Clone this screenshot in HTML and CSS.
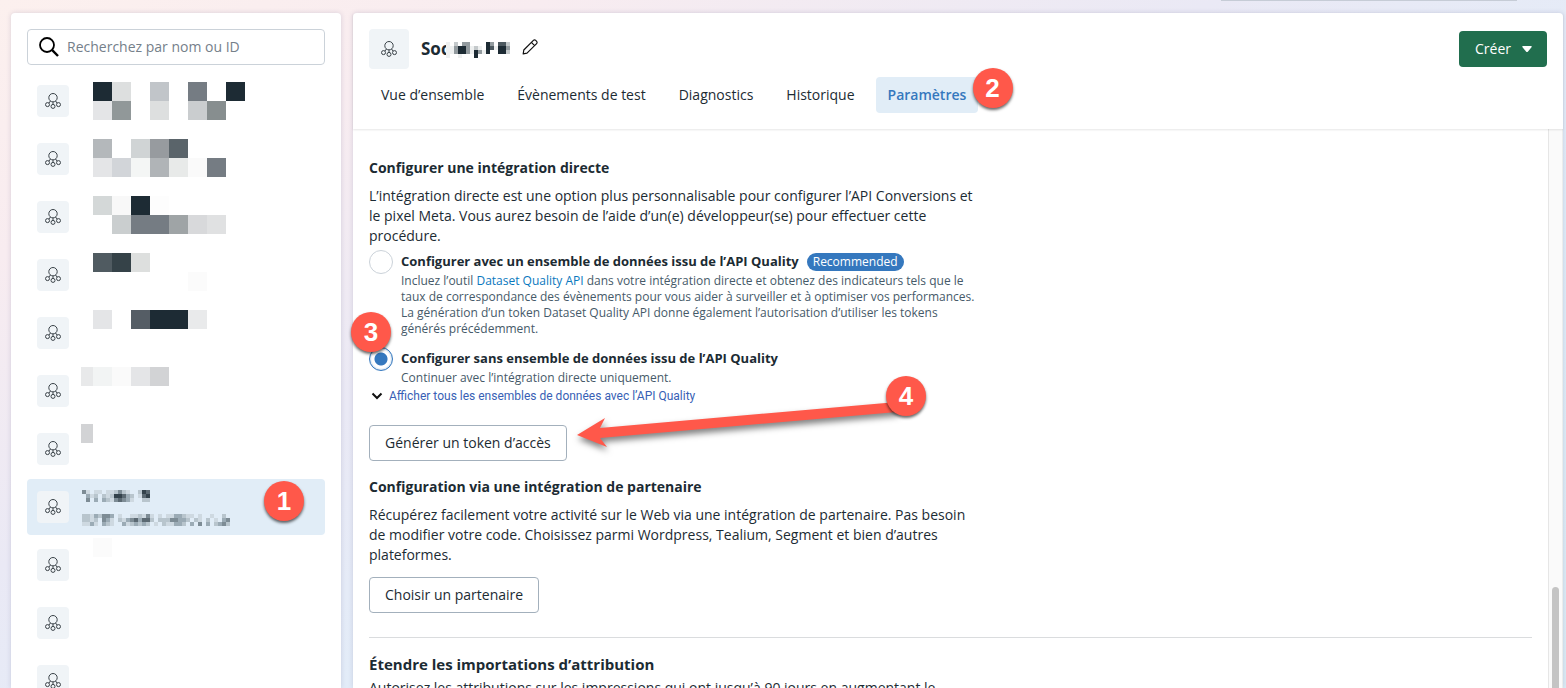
FILE: index.html
```
<!DOCTYPE html>
<html lang="fr">
<head>
	<meta charset="UTF-8">
	<meta name="viewport" content="width=device-width, initial-scale=1">
	<title>Paramètres</title>
	<link rel="stylesheet" href="styles.css">
</head>
<body>
	<svg class="defs" width="0" height="0" aria-hidden="true">
		<symbol id="dataset" viewBox="0 0 16 16">
			<g fill="none" stroke="#3a4248" stroke-width="1">
				<circle cx="8" cy="4.7" r="4.2"/>
				<circle cx="2.5" cy="11.6" r="2"/>
				<circle cx="13.5" cy="11.6" r="2"/>
				<circle cx="8" cy="13.4" r="2"/>
				<path d="M5.4 8L4 10M10.6 8L12 10M8 8.8v2.4"/>
			</g>
		</symbol>
	</svg>
	<div class="topbox"></div>
	<div class="page">
		<aside class="sidebar">
			<label class="search">
				<svg width="22" height="22" viewBox="0 0 22 22" fill="none" stroke="#000"><circle cx="9" cy="9" r="7" stroke-width="1.8"/><path d="M14.2 14.2L20 20" stroke-width="2.4"/></svg>
				<input type="text" placeholder="Recherchez par nom ou ID" aria-label="Recherchez par nom ou ID">
			</label>
			<ul class="list">
				<li><span class="avatar"><svg><use href="#dataset"/></svg></span></li>
				<li><span class="avatar"><svg><use href="#dataset"/></svg></span></li>
				<li><span class="avatar"><svg><use href="#dataset"/></svg></span></li>
				<li><span class="avatar"><svg><use href="#dataset"/></svg></span></li>
				<li><span class="avatar"><svg><use href="#dataset"/></svg></span></li>
				<li><span class="avatar"><svg><use href="#dataset"/></svg></span></li>
				<li><span class="avatar"><svg><use href="#dataset"/></svg></span></li>
				<li class="selected">
					<span class="avatar"><svg><use href="#dataset"/></svg></span>
					<span class="lines">
						<svg id="maskName" width="68" height="12"></svg>
						<svg id="maskId" width="148" height="12"></svg>
					</span>
					<b class="step step1">1</b>
				</li>
				<li><span class="avatar"><svg><use href="#dataset"/></svg></span></li>
				<li><span class="avatar"><svg><use href="#dataset"/></svg></span></li>
				<li><span class="avatar"><svg><use href="#dataset"/></svg></span></li>
				<svg id="maskList" class="masklist" width="164" height="480"></svg>
			</ul>
		</aside>
		<main class="panel">
			<header class="head">
				<div class="headrow">
					<span class="avatar big"><svg><use href="#dataset"/></svg></span>
					<h1>Soc<svg id="maskTitle" class="masktitle" width="64" height="16"></svg></h1>
					<button class="edit" aria-label="Modifier">
						<svg width="16" height="16" viewBox="0 0 16 16" fill="none" stroke="#111" stroke-width="1.2" stroke-linejoin="round"><path d="M1.2 14.8l.6-3.8L11.4 1.4a1.6 1.6 0 0 1 2.3 0l.9.9a1.6 1.6 0 0 1 0 2.3L5 14.2zM9.4 3.4l3.2 3.2"/></svg>
					</button>
					<button class="create">Créer <svg width="10" height="6" viewBox="0 0 10 6"><path d="M1 0h8q1 0 .7.9L6 5.5q-1 1-2 0L.3.9Q0 0 1 0z" fill="#fff"/></svg></button>
				</div>
				<nav class="tabs">
					<a href="#">Vue d’ensemble</a>
					<a href="#">Évènements de test</a>
					<a href="#">Diagnostics</a>
					<a href="#">Historique</a>
					<a href="#" class="active">Paramètres<b class="step step2">2</b></a>
				</nav>
			</header>
			<div class="body">
				<div class="content">
					<section>
						<h2>Configurer une intégration directe</h2>
						<p>L’intégration directe est une option plus personnalisable pour configurer l’API Conversions et le pixel Meta. Vous aurez besoin de l’aide d’un(e) développeur(se) pour effectuer cette procédure.</p>
						<div class="option">
							<input type="radio" name="mode" id="with">
							<div>
								<label for="with">Configurer avec un ensemble de données issu de l’API Quality</label><span class="badge">Recommended</span>
								<p class="small">Incluez l’outil <a href="#">Dataset Quality API</a> dans votre intégration directe et obtenez des indicateurs tels que le taux de correspondance des évènements pour vous aider à surveiller et à optimiser vos performances. La génération d’un token Dataset Quality API donne également l’autorisation d’utiliser les tokens générés précédemment.</p>
							</div>
						</div>
						<div class="option">
							<input type="radio" name="mode" id="without" checked>
							<div>
								<label for="without">Configurer sans ensemble de données issu de l’API Quality</label>
								<p class="small">Continuer avec l’intégration directe uniquement.</p>
							</div>
							<b class="step step3">3</b>
						</div>
						<a href="#" class="more"><svg width="12" height="8" viewBox="0 0 12 8" fill="none" stroke="#111" stroke-width="2"><path d="M1.5 1.5L6 6l4.5-4.5"/></svg>Afficher tous les ensembles de données avec l’API Quality</a>
						<div class="action">
							<button class="btn">Générer un token d’accès</button>
							<svg class="arrow" width="340" height="60" viewBox="0 0 340 60"><path d="M6 36L34 19 29 29 326 3v10L29 39 36 48z" fill="#ff584a"/></svg>
							<b class="step step4">4</b>
						</div>
					</section>
					<section>
						<h2>Configuration via une intégration de partenaire</h2>
						<p>Récupérez facilement votre activité sur le Web via une intégration de partenaire. Pas besoin de modifier votre code. Choisissez parmi Wordpress, Tealium, Segment et bien d’autres plateformes.</p>
						<button class="btn partner">Choisir un partenaire</button>
					</section>
					<section class="ruled">
						<h2 class="large">Étendre les importations d’attribution</h2>
						<p>Autorisez les attributions sur les impressions qui ont jusqu’à 90 jours en augmentant le</p>
					</section>
				</div>
				<div class="track"><div class="thumb"></div></div>
			</div>
		</main>
	</div>
	<script src="script.js"></script>
</body>
</html>
```
FILE: styles.css
```
*{box-sizing: border-box;}
body,ul,h1,h2,p{padding: 0;margin: 0;}
body{height: 100vh;overflow: hidden;position: relative;font: 14px/20px "Open Sans","Liberation Sans",sans-serif;color: #1c2b33;background: linear-gradient(155deg,#fcf0ee 0%,#f8ecf0 18%,#eae9f5 40%,#e0edf9 66%,#dcecf5 100%);}
a{color: #0a78be;text-decoration: none;}
button,input{font: inherit;color: inherit;}
button{cursor: pointer;}
.defs{position: absolute;}
.topbox{position: absolute;top: 0;right: 49px;width: 296px;height: 1px;background: #c6ccd6;}
.page{display: flex;gap: 12px;height: 100%;padding: 13px 3px 0 11px;}
.sidebar,.panel{background: #fff;border-radius: 4px 4px 0 0;box-shadow: 0 0 5px rgba(60,60,110,.18);}

.sidebar{flex: 0 0 330px;padding: 16px;overflow: hidden;}
.search{display: flex;align-items: center;gap: 7px;height: 36px;padding: 0 10px;border: 1px solid #cbd2d9;border-radius: 4px;}
.search input{flex: 1;min-width: 0;border: 0;outline: 0;padding: 0;background: none;}
.search input::placeholder{color: #75808a;opacity: 1;}
.list{position: relative;margin-top: 8px;list-style: none;}
.list li{position: relative;display: flex;align-items: center;gap: 13px;height: 56px;margin-bottom: 2px;padding: 0 10px;border-radius: 4px;}
.list .selected{background: #e1edf7;}
.avatar{display: flex;align-items: center;justify-content: center;flex: none;width: 32px;height: 32px;border-radius: 4px;background: #f0f4f7;}
.avatar svg{width: 16px;height: 16px;}
.avatar.big{width: 40px;height: 40px;}
.lines{display: flex;flex-direction: column;gap: 12px;padding-top: 2px;}
.masklist{position: absolute;left: 54px;top: 9px;}

.panel{flex: 1;min-width: 0;display: flex;flex-direction: column;}
.head{padding: 16px;box-shadow: 0 1px 2px rgba(0,0,0,.1);z-index: 1;}
.headrow{display: flex;align-items: center;margin-bottom: 8px;}
.head h1{position: relative;width: 89px;margin-left: 12px;font-size: 17px;line-height: 24px;font-weight: 700;}
.masktitle{position: absolute;left: 25px;top: 5px;}
.edit{display: flex;margin-left: 12px;padding: 0 0 4px;border: 0;background: none;}
.create{display: flex;align-items: center;gap: 11px;height: 36px;margin-left: auto;padding: 0 15px 0 16px;border: 0;border-radius: 4px;background: #216e4e;color: #fff;font-weight: 500;}
.tabs{display: flex;gap: 9px;}
.tabs a{position: relative;padding: 8px 12px;border-radius: 4px;color: #1c2b33;}
.tabs .active{background: #e1edf7;color: #3578be;font-weight: 600;}

.body{flex: 1;min-height: 0;display: flex;}
.content{flex: 1;min-width: 0;padding: 29px 16px 0;}
.content h2{margin-bottom: 8px;font-size: 14px;line-height: 20px;font-weight: 700;}
.content .large{margin-bottom: 4px;font-size: 15px;}
.content p{max-width: 610px;}
.option{position: relative;display: flex;align-items: flex-start;gap: 8px;margin-top: 4px;}
.option + .option{margin-top: 10px;}
.option label{font-size: 13px;font-weight: 700;line-height: 23px;}
.option .small{max-width: 574px;font-size: 12px;line-height: 16px;color: #465a69;}
.option input{appearance: none;flex: none;width: 24px;height: 24px;margin: 0;border: 1px solid #cbd2d9;border-radius: 50%;background: #fff;}
.option input:checked{border: 1px solid #3578be;background: radial-gradient(circle,#3578be 0 6px,#fff 7px 9px,#cfdfef 11px);}
.badge{display: inline-block;margin-left: 8px;padding: 0 6px;border-radius: 9px;background: #3578be;color: #fff;font-size: 12px;line-height: 18px;font-weight: 500;}
.more{display: flex;align-items: center;gap: 6px;margin: 2px 0 21px;padding-left: 2px;font: 12px/16px Roboto,sans-serif;color: #385fb5;}
.action{position: relative;margin-bottom: 16px;}
.btn{display: block;height: 36px;padding: 0 15px;border: 1px solid #a3b0bc;border-radius: 4px;background: #fff;font-weight: 500;}
.partner{margin-top: 12px;}
.ruled{margin-top: 24px;padding-top: 16px;border-top: 1px solid #dadcde;}
.track{flex: none;display: flex;flex-direction: column;justify-content: flex-end;width: 15px;padding: 0 3px;border-left: 1px solid #e6e6e6;border-right: 1px solid #ececec;background: #fafafa;}
.thumb{height: 18%;border-radius: 4px 4px 0 0;background: #c4c4c4;}

/* numbered markers and arrow, drawn over the page */
.step{position: absolute;z-index: 2;width: 40px;height: 40px;border-radius: 50%;background: #ff584a;color: #fff;font: bold 26px/40px "Liberation Sans",sans-serif;text-align: center;box-shadow: 0 2px 3px rgba(0,0,0,.6);}
.step1{right: 21px;top: 2px;}
.step2{left: 97px;top: -9px;}
.step3{left: -18px;top: -35px;}
.step4{left: 517px;top: -49px;}
.arrow{position: absolute;left: 202px;top: -26px;filter: drop-shadow(1px 4px 3px rgba(0,0,0,.5));}
```
FILE: script.js
```
// one character per square, "." leaves it empty
function cells(id, size, rows, palette) {
	var svg = document.getElementById(id);
	var out = "";
	rows.forEach(function (row, y) {
		row.split("").forEach(function (c, x) {
			if (palette[c]) {
				out += '<rect x="' + x * size + '" y="' + y * size + '" width="' + size + '" height="' + size + '" fill="' + palette[c] + '"/>';
			}
		});
	});
	svg.innerHTML = out;
	svg.setAttribute("shape-rendering", "crispEdges");
}

// x, y, colour, width when not 19
var list = [
	[12, 0, "#1d2b34"], [31, 0, "#dddfdf"], [69, 0, "#c1c5c9"], [107, 0, "#757c83"], [145, 0, "#1d2b34"],
	[12, 19, "#e4e5e7"], [31, 19, "#919899"], [69, 19, "#dddfdf"], [107, 19, "#cacdcf"], [126, 19, "#878e8f"],
	[12, 57, "#b4b8bb"], [50, 57, "#d0d4d5"], [69, 57, "#979b9f"], [88, 57, "#5a646a"],
	[12, 76, "#e4e5e7"], [31, 76, "#d2d5d9"], [50, 76, "#f4f6f5"], [69, 76, "#b0b4b7"], [88, 76, "#e8eae9"], [107, 76, "#fafafa"], [126, 76, "#757c83"],
	[12, 114, "#d4d8d8"], [31, 114, "#f8f8f8"], [50, 114, "#1d2b34"], [69, 114, "#fdfdfd"],
	[31, 133, "#cacecf"], [50, 133, "#757c83"], [69, 133, "#757c83"], [88, 133, "#9fa4a6"], [107, 133, "#d8d9db"], [126, 133, "#e0e1e2"],
	[12, 171, "#505b61"], [31, 171, "#354248"], [50, 171, "#dddfde"], [107, 190, "#fbfbfb"],
	[12, 228, "#e4e5e7"], [50, 228, "#555d65"], [69, 228, "#1d2b34"], [88, 228, "#1d2b34"], [107, 228, "#e9eaeb"],
	[0, 285, "#e8e9ea", 12], [12, 285, "#f2f4f4"], [31, 285, "#fafafa"], [50, 285, "#e4e5e7"], [69, 285, "#d2d3d5"],
	[0, 342, "#d2d3d5", 12],
	[12, 456, "#fbfbfb"]
];
document.getElementById("maskList").innerHTML = list.map(function (c) {
	return '<rect x="' + c[0] + '" y="' + c[1] + '" width="' + (c[3] || 19) + '" height="19" fill="' + c[2] + '"/>';
}).join("");

var blue = {"1": "#ced9e1", "2": "#b8c5cd", "3": "#9babb5", "4": "#7d8c95", "5": "#5b6972", "6": "#33424b"};
cells("maskName", 4, [
	"41.11.1124210.265",
	".312.21266532.156",
	".4.3.321454310.22"
], blue);
cells("maskId", 4, [
	"22132443.1..112141.1.1133211.1..1..2.",
	"2212.431.213453552.22244332.21.2.1.34",
	"1131.321..3123232.1.211332.3.4.3.2342"
], blue);

cells("maskTitle", 4, [
	"1.2.33....53.442",
	"113553121.541553",
	"11355315315..552",
	"1..1...5........"
], {"1": "#eef0f0", "2": "#c4c9cb", "3": "#939b9f", "4": "#4d5960", "5": "#1d2b34"});
```
